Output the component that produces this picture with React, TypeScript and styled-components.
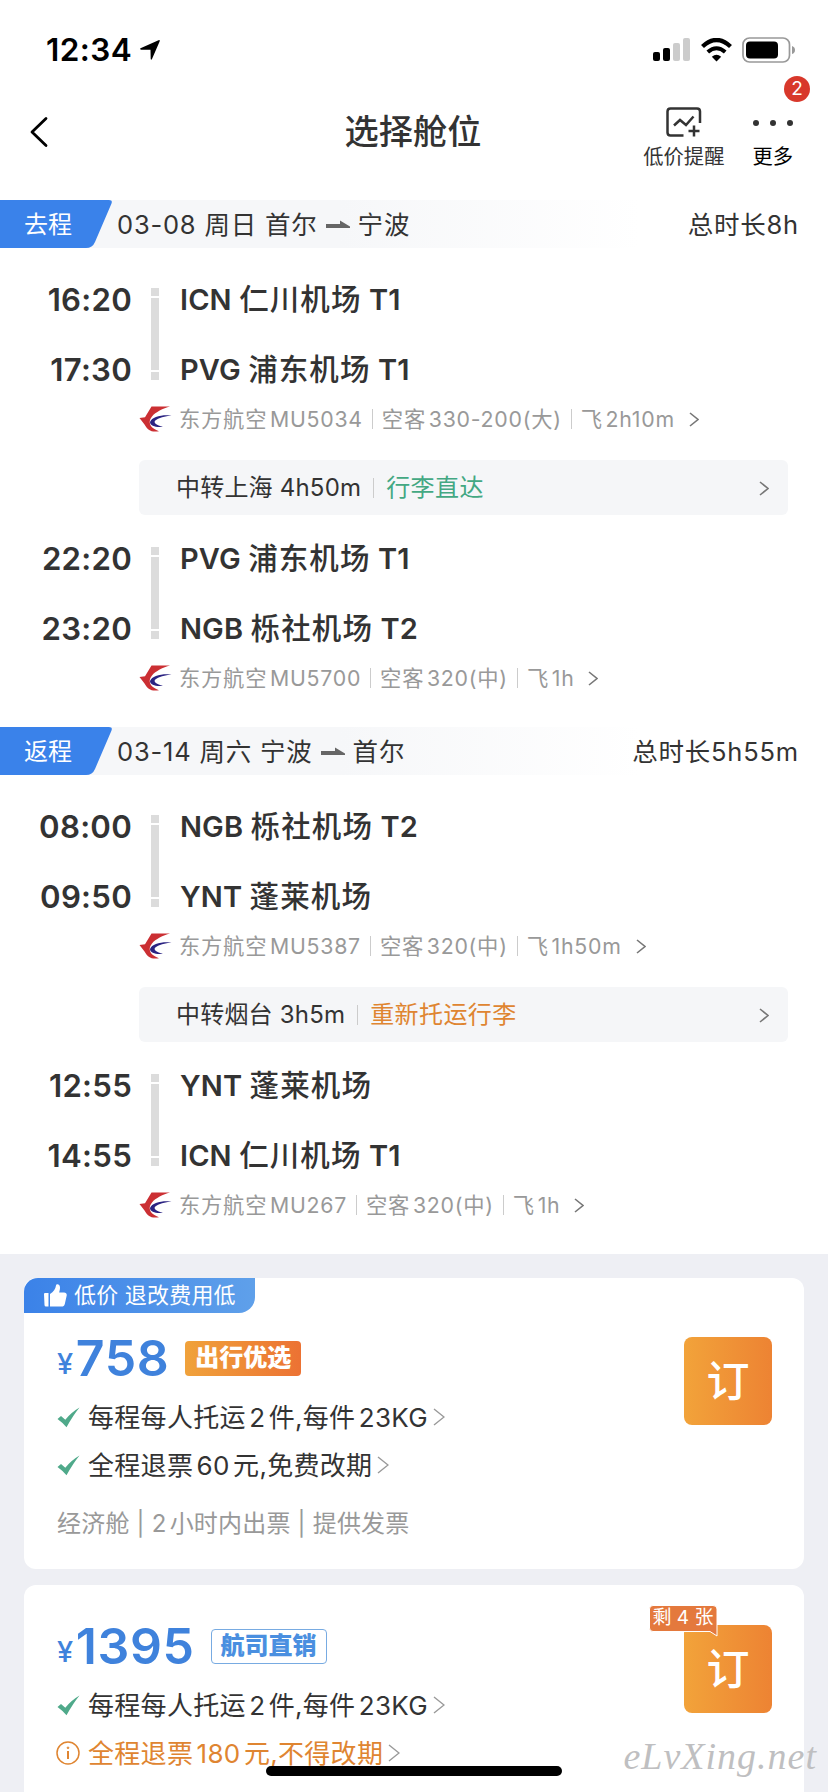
import React from 'react';
import styled, { createGlobalStyle } from 'styled-components';

const Global = createGlobalStyle`
  * { box-sizing: border-box; }
  body {
    margin: 0;
    background: #fff;
    color: #333;
    font-family: Inter, "Noto Sans CJK SC", sans-serif;
  }
  svg { display: block; flex: none; }
`;

const Screen = styled.main`
  position: relative;
  display: flex;
  flex-direction: column;
  width: 828px;
  height: 1792px;
  overflow: hidden;
  background: #fff;
  white-space: pre;
`;

const StatusBar = styled.header`
  display: flex;
  flex: none;
  align-items: center;
  height: 88px;
  padding: 12px 32px 0 46px;
  color: #000;
`;
const Clock = styled.span`
  font-size: 31.5px;
  font-weight: 600;
  line-height: 40px;
  letter-spacing: 0.4px;
  margin-right: 7px;
`;
const StatusIcons = styled.div`
  display: flex;
  align-items: center;
  gap: 10px;
  margin-left: auto;
`;

const NavBar = styled.nav`
  display: grid;
  flex: none;
  grid-template-columns: 300px 1fr 300px;
  align-items: center;
  height: 112px;
  padding-bottom: 25px;
`;
const BackSlot = styled.div`
  padding-left: 29px;
`;
const Title = styled.h1`
  margin: 0;
  padding-right: 2px;
  text-align: center;
  font-size: 34.2px;
  font-weight: 500;
  line-height: 44px;
`;
const Actions = styled.div`
  display: flex;
  justify-content: flex-end;
  gap: 28px;
  padding: 13px 35px 0 0;
`;
const Action = styled.div<{ $dark?: boolean }>`
  position: relative;
  display: flex;
  flex-direction: column;
  align-items: center;
  gap: 7px;
  font-size: 20.3px;
  line-height: 26px;
  color: ${(p) => (p.$dark ? '#000' : '#333')};
`;
const CountBadge = styled.span`
  position: absolute;
  top: -31px;
  right: -17px;
  width: 26px;
  height: 26px;
  border-radius: 50%;
  background: #d8382b;
  color: #fff;
  font-size: 19px;
  line-height: 26px;
  text-align: center;
`;

const TripHeader = styled.div`
  display: flex;
  flex: none;
  align-items: center;
  height: 48px;
  padding-right: 29px;
  font-size: 25.5px;
  letter-spacing: 0.8px;
  line-height: 36px;
  background: linear-gradient(90deg, #f6f7f9 0, #f6f7f9 340px, #fff 640px);
`;
const Direction = styled.div`
  display: grid;
  grid-template-rows: 48px;
  width: 117px;
  height: 48px;
  align-items: center;
  & > * { grid-area: 1 / 1; }
  span {
    padding: 2px 0 0 24px;
    color: #fff;
    font-size: 24px;
    letter-spacing: 0;
    line-height: 36px;
  }
`;
const Route = styled.div`
  display: flex;
  align-items: center;
  gap: 8px;
  padding-top: 1px;
`;
const Total = styled.div`
  margin-left: auto;
  padding-top: 1px;
`;

const Trip = styled.section`
  display: flex;
  flex: none;
  flex-direction: column;
  height: 479px;
  padding-top: 17px;
`;
const Leg = styled.div`
  display: grid;
  grid-template-columns: 132px 46px 1fr;
  grid-template-rows: 70px 70px;
  align-items: center;
`;
const Time = styled.div`
  text-align: right;
  font-size: 31.2px;
  font-weight: 600;
  letter-spacing: 0.25px;
  line-height: 40px;
`;
const Airport = styled.div`
  padding: 0 0 1px 2px;
  font-size: 29px;
  font-weight: 600;
  line-height: 40px;
  letter-spacing: 0.1px;
  span { font-weight: 500; letter-spacing: 1.1px; font-size: 29.5px; }
`;
const Track = styled.div`
  grid-area: 1 / 2 / 3 / 3;
  display: flex;
  flex-direction: column;
  align-items: center;
  gap: 2px;
  padding-bottom: 2px;
  i { width: 8px; height: 8px; background: #dcdcdc; }
  i:nth-child(2) { height: 72px; }
`;
const FlightInfo = styled.div`
  display: flex;
  align-items: center;
  height: 30px;
  margin: -1px 0 0 139px;
  color: #999;
  font-size: 21.3px;
  letter-spacing: 0.75px;
  line-height: 30px;
  svg:first-child { margin-right: 7px; }
  svg:last-child { margin-left: 14px; }
`;
const Gap = styled.i`
  display: inline-block;
  width: 0.13em;
`;
const Divider = styled.i<{ $gap: string }>`
  width: 1px;
  height: 20px;
  margin: 0 ${(p) => p.$gap};
  background: #ccc;
`;
const Transfer = styled.div`
  display: flex;
  align-items: center;
  height: 55px;
  margin: 26px 40px 9px 139px;
  padding: 1px 19px 0 37px;
  border-radius: 6px;
  background: #f5f6f8;
  font-size: 24px;
  letter-spacing: 0.2px;
  line-height: 32px;
  svg { margin-left: auto; }
`;
const Baggage = styled.span<{ $warn?: boolean }>`
  color: ${(p) => (p.$warn ? '#df8531' : '#43a883')};
  letter-spacing: 0.4px;
`;

const Fares = styled.section`
  display: flex;
  flex-direction: column;
  gap: 16px;
  flex: 1;
  min-height: 0;
  padding: 24px;
  background: #eeeff4;
`;
const FareCard = styled.article`
  display: flex;
  flex-direction: column;
  flex: none;
  height: 291px;
  border-radius: 12px;
  background: #fff;
`;
const Ribbon = styled.div`
  display: flex;
  align-items: center;
  gap: 7px;
  width: 231px;
  height: 35px;
  padding-left: 20px;
  border-radius: 14px 0 16px 0;
  background: linear-gradient(90deg, #3b82e8, #5fa0ea);
  color: #fff;
  font-size: 22px;
  letter-spacing: 0.2px;
  line-height: 33px;
`;
const FareBody = styled.div<{ $top: number }>`
  display: flex;
  justify-content: space-between;
  padding: ${(p) => p.$top}px 32px 0 33px;
`;
const PriceLine = styled.div`
  display: flex;
  align-items: center;
  height: 44px;
  margin-bottom: 9px;
`;
const Price = styled.div`
  display: flex;
  align-items: baseline;
  color: #3f82dc;
  font-size: 50px;
  font-weight: 600;
  letter-spacing: 0.6px;
  line-height: 44px;
  small { margin-right: 2px; font-size: 29px; font-weight: 500; transform: translateY(-2px); }
`;
const Label = styled.span<{ $outline?: boolean }>`
  display: flex;
  align-items: center;
  justify-content: center;
  width: 116px;
  height: 35px;
  margin: 0 0 8px 16px;
  border-radius: 4px;
  font-size: 24px;
  font-weight: 900;
  line-height: 33px;
  padding-bottom: 2px;
  color: ${(p) => (p.$outline ? '#4a8fe0' : '#fff')};
  border: ${(p) => (p.$outline ? '1.5px solid #78abe2' : 'none')};
  background: ${(p) => (p.$outline ? '#fff' : 'linear-gradient(90deg, #f0a23b, #ec7233)')};
`;
const Rule = styled.div<{ $warn?: boolean }>`
  display: flex;
  align-items: center;
  height: 48px;
  font-size: 26px;
  color: ${(p) => (p.$warn ? '#df8531' : '#333')};
  svg:first-child { margin-left: ${(p) => (p.$warn ? '-1px' : '0')}; }
  span { margin: 0 5px 0 8px; padding-top: 2px; letter-spacing: 0.3px; line-height: 34px; }
`;
const Footnote = styled.div`
  margin-top: 20px;
  color: #999;
  font-size: 24px;
  letter-spacing: 0.2px;
  line-height: 30px;
`;
const BookButton = styled.button`
  position: relative;
  width: 88px;
  height: 88px;
  margin-top: -3px;
  padding: 0;
  border: 0;
  border-radius: 8px;
  background: linear-gradient(90deg, #f2a33a, #ed8333);
  color: #fff;
  font: 500 43px/82px Inter, "Noto Sans CJK SC", sans-serif;
`;
const SeatsLeft = styled.span`
  position: absolute;
  left: -35px;
  top: -20px;
  width: 68px;
  height: 32px;
  color: #fff;
  font-size: 19px;
  font-weight: 400;
  line-height: 25px;
  text-align: center;
  svg { position: absolute; left: 0; top: 0; }
  b { position: relative; font-weight: 400; }
`;
const HomeBar = styled.div`
  position: absolute;
  left: 266px;
  bottom: 16px;
  width: 296px;
  height: 10px;
  border-radius: 5px;
  background: #000;
`;
const Watermark = styled.div`
  position: absolute;
  right: 11px;
  bottom: 12px;
  color: #bfbfc1;
  font-family: "Monotype Corsiva", "Z003", "URW Chancery L", "Liberation Serif", serif;
  font-style: italic;
  font-size: 38px;
  line-height: 48px;
  letter-spacing: 1px;
`;

const Chevron = ({ w = 10, h = 15, color = '#777', sw = 1.6 }) => (
  <svg width={w} height={h} viewBox={`0 0 ${w} ${h}`} fill="none" stroke={color} strokeWidth={sw}>
    <path d={`M1 1 L${w - 1} ${h / 2} L1 ${h - 1}`} />
  </svg>
);

const AirlineLogo = () => (
  <svg width="33" height="26" viewBox="0 0 33 26">
    <path d="M12.500 0.500 H31 C24 2.500 16.500 6 13 10.500 C8.500 16 10.500 22 20 25.300 C12 26.500 8.500 24 5.500 18.500 L0.500 12 L6 11.300 Z" fill="#cb2f33" />
    <path d="M32.500 9.500 C22 8.500 13 11 11 16 C11 20 17 21.500 24 20.800 C17.500 19.500 14.500 17 16 14.800 C19.500 11.500 26 10.300 32.500 9.500 Z" fill="#2b2382" />
  </svg>
);

const Check = () => (
  <svg width="23" height="21" viewBox="0 0 23 21">
    <path d="M0.500 12 L4 9 L8.300 12.700 Q14 5.500 22.500 0.500 Q16 8.500 9.500 20.300 Q5.500 15.500 0.500 12 Z" fill="#4fa98a" />
  </svg>
);

const Info = () => (
  <svg width="24" height="24" viewBox="0 0 24 24" fill="none" stroke="#df8531" strokeWidth="1.5">
    <circle cx="12" cy="12" r="11" />
    <path d="M12 10 V18" strokeWidth="2" />
    <circle cx="12" cy="6.800" r="0.900" fill="#df8531" strokeWidth="0.8" />
  </svg>
);

const ThumbUp = () => (
  <svg width="23" height="23" viewBox="0 0 23 23" fill="#fff">
    <path d="M0 10 Q0 9 1 9 H4.500 V22.500 H2 Q0.500 22.500 0.500 21 Z" />
    <path d="M6 10 C9.500 8 11.500 5 12 1.500 C12.300 -0.500 16 0 16 3.500 C16 5.500 15.500 7 15.200 8.500 H20 C22 8.500 23 9.800 22.700 11.500 L20.800 20 C20.300 22 19.300 22.600 17.500 22.600 H6 Z" />
  </svg>
);

const RouteArrow = () => (
  <svg width="24" height="10" viewBox="0 0 24 10">
    <path d="M0 4 H14 V0.500 L24 6.500 V8 H0 Z" fill="#666" />
  </svg>
);

type StopData = [time: string, code: string, name: string, terminal: string];
type LegData = { dep: StopData; arr: StopData; flight: string; plane: string; length: string };
type TripData = { way: string; date: string; from: string; to: string; total: string; stop: string; bag: string; warn: boolean; legs: LegData[] };

const trips: TripData[] = [
  {
    way: '去程', date: '03-08 周日 ', from: '首尔', to: '宁波', total: '总时长8h',
    stop: '中转上海 4h50m', bag: '行李直达', warn: false,
    legs: [
      { dep: ['16:20', 'ICN', '仁川机场', 'T1'], arr: ['17:30', 'PVG', '浦东机场', 'T1'], flight: 'MU5034', plane: '330-200(大)', length: '2h10m' },
      { dep: ['22:20', 'PVG', '浦东机场', 'T1'], arr: ['23:20', 'NGB', '栎社机场', 'T2'], flight: 'MU5700', plane: '320(中)', length: '1h' },
    ],
  },
  {
    way: '返程', date: '03-14 周六 ', from: '宁波', to: '首尔', total: '总时长5h55m',
    stop: '中转烟台 3h5m', bag: '重新托运行李', warn: true,
    legs: [
      { dep: ['08:00', 'NGB', '栎社机场', 'T2'], arr: ['09:50', 'YNT', '蓬莱机场', ''], flight: 'MU5387', plane: '320(中)', length: '1h50m' },
      { dep: ['12:55', 'YNT', '蓬莱机场', ''], arr: ['14:55', 'ICN', '仁川机场', 'T1'], flight: 'MU267', plane: '320(中)', length: '1h' },
    ],
  },
];

const Stop = ({ data }: { data: StopData }) => (
  <Airport>{data[1]} <span>{data[2]}</span> {data[3]}</Airport>
);

const LegView = ({ leg }: { leg: LegData }) => (
  <>
    <Leg>
      <Time>{leg.dep[0]}</Time>
      <Track><i /><i /><i /></Track>
      <Stop data={leg.dep} />
      <Time>{leg.arr[0]}</Time>
      <Stop data={leg.arr} />
    </Leg>
    <FlightInfo>
      <AirlineLogo />
      东方航空<Gap />{leg.flight}
      <Divider $gap="9px" />
      空客<Gap />{leg.plane}
      <Divider $gap="9px" />
      飞<Gap />{leg.length}
      <Chevron />
    </FlightInfo>
  </>
);

const BaggageRule = () => (
  <Rule>
    <Check />
    <span>每程每人托运<Gap />2<Gap />件,每件<Gap />23KG</span>
    <Chevron w={12} h={18} color="#999" sw={1.4} />
  </Rule>
);

export default function App() {
  return (
    <Screen>
      <Global />
      <StatusBar>
        <Clock>12:34</Clock>
        <svg width="22" height="22" viewBox="0 0 22 22">
          <path d="M1.500 9.300 L19.500 1.200 Q21.300 0.600 20.600 2.400 L13 20 Q12 21.500 11.700 19.800 L11.500 10.800 L2 10.700 Q0.300 10.200 1.500 9.300 Z" fill="#000" />
        </svg>
        <StatusIcons>
          <svg width="38" height="24" viewBox="0 0 38 24">
            <rect x="0" y="14" width="7" height="9" rx="2" />
            <rect x="10" y="10" width="7" height="13" rx="2" />
            <rect x="20" y="5" width="7" height="18" rx="2" fill="#ccc" />
            <rect x="30" y="0" width="7" height="23" rx="2" fill="#ccc" />
          </svg>
          <svg width="31" height="24" viewBox="0 0 31 24" fill="none" stroke="#000">
            <path d="M1.500 8.500 Q15.500 -4.500 29.500 8.500" strokeWidth="4.300" />
            <path d="M6.800 14 Q15.500 6.500 24.200 14" strokeWidth="4" />
            <path d="M10.800 18.800 Q15.500 14.800 20.200 18.800 L15.500 23.500 Z" fill="#000" stroke="none" />
          </svg>
          <svg width="54" height="26" viewBox="0 0 54 26">
            <rect x="1" y="1" width="46.500" height="24" rx="6.500" fill="none" stroke="#999" strokeWidth="1.700" />
            <rect x="4" y="4.500" width="32" height="17" rx="4" />
            <path d="M50 9 Q53 10 53 13 Q53 16 50 17 Z" fill="#999" />
          </svg>
        </StatusIcons>
      </StatusBar>
      <NavBar>
        <BackSlot>
          <svg width="20" height="32" viewBox="0 0 20 32" fill="none" stroke="#000" strokeWidth="2.800" strokeLinecap="round" strokeLinejoin="round">
            <path d="M17 2.500 L3 16 L17 29.500" />
          </svg>
        </BackSlot>
        <Title>选择舱位</Title>
        <Actions>
          <Action>
            <svg width="36" height="30" viewBox="0 0 36 30" fill="none" stroke="#333" strokeWidth="2.500">
              <path d="M17.500 28.500 H4.500 Q1.500 28.500 1.500 25.500 V4.500 Q1.500 1.500 4.500 1.500 H31 Q34 1.500 34 4.500 V16" />
              <path d="M8 18.500 L14 13 L20 18 L27.500 9.500" />
              <path d="M22.500 24 H33.500 M28 18.500 V29.500" />
            </svg>
            低价提醒
          </Action>
          <Action $dark>
            <svg width="40" height="30" viewBox="0 0 40 30" fill="#333">
              <circle cx="3" cy="16" r="3" />
              <circle cx="20" cy="16" r="3" />
              <circle cx="37" cy="16" r="3" />
            </svg>
            更多
            <CountBadge>2</CountBadge>
          </Action>
        </Actions>
      </NavBar>

      {trips.map((t) => (
        <React.Fragment key={t.way}>
          <TripHeader>
            <Direction>
              <svg width="112" height="48" viewBox="0 0 112 48">
                <path d="M0 0 H109 Q113 0 111.300 4 L95 42 Q92.500 48 86 48 H0 Z" fill="#3a82ea" />
              </svg>
              <span>{t.way}</span>
            </Direction>
            <Route>{t.date}{t.from}<RouteArrow />{t.to}</Route>
            <Total>{t.total}</Total>
          </TripHeader>
          <Trip>
            <LegView leg={t.legs[0]} />
            <Transfer>
              {t.stop}
              <Divider $gap="12px" />
              <Baggage $warn={t.warn}>{t.bag}</Baggage>
              <Chevron />
            </Transfer>
            <LegView leg={t.legs[1]} />
          </Trip>
        </React.Fragment>
      ))}

      <Fares>
        <FareCard>
          <Ribbon><ThumbUp />低价 退改费用低</Ribbon>
          <FareBody $top={27}>
            <div>
              <PriceLine>
                <Price><small>¥</small>758</Price>
                <Label>出行优选</Label>
              </PriceLine>
              <BaggageRule />
              <Rule><Check /><span>全程退票<Gap />60<Gap />元,免费改期</span><Chevron w={12} h={18} color="#999" sw={1.4} /></Rule>
              <Footnote>经济舱 | 2<Gap />小时内出票 | 提供发票</Footnote>
            </div>
            <BookButton>订</BookButton>
          </FareBody>
        </FareCard>
        <FareCard>
          <FareBody $top={43}>
            <div>
              <PriceLine>
                <Price><small>¥</small>1395</Price>
                <Label $outline>航司直销</Label>
              </PriceLine>
              <BaggageRule />
              <Rule $warn><Info /><span>全程退票<Gap />180<Gap />元,不得改期</span><Chevron w={12} h={18} color="#999" sw={1.4} /></Rule>
            </div>
            <BookButton>
              订
              <SeatsLeft>
                <svg width="70" height="34" viewBox="0 0 70 34">
                  <path d="M4 0.500 H64 Q68 0.500 68 4 V31 L61 26.500 H4 Q0.500 26.500 0.500 23 V4 Q0.500 0.500 4 0.500 Z" fill="#e4793d" stroke="#fff" strokeWidth="1" />
                </svg>
                <b>剩 4 张</b>
              </SeatsLeft>
            </BookButton>
          </FareBody>
        </FareCard>
      </Fares>
      <HomeBar />
      <Watermark>eLvXing.net</Watermark>
    </Screen>
  );
}
